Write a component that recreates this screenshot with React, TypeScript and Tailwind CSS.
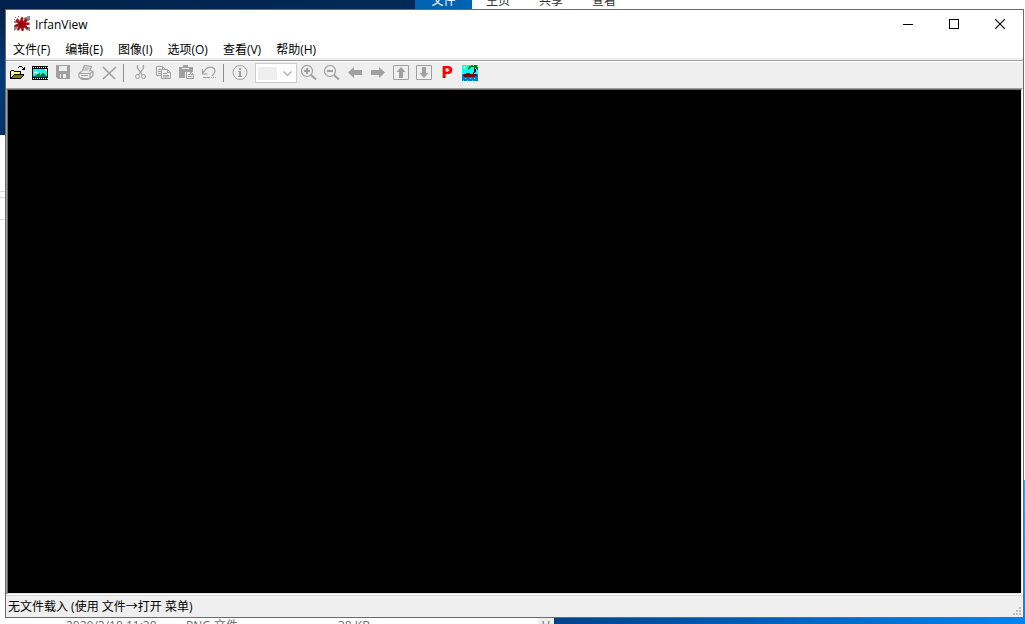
import type { ReactNode } from "react";

const PALETTE: Record<string, string> = {
  k: "#000000",
  y: "#ffff00",
  w: "#ffffff",
  o: "#808000",
  c: "#00ffff",
  g: "#008000",
  t: "#008080",
  b: "#0078d7",
  m: "#800000",
};

function PixelIcon({ rows }: { rows: string[] }) {
  return (
    <svg viewBox="0 0 16 16" className="block size-4" shapeRendering="crispEdges" aria-hidden="true">
      {rows.flatMap((row, y) =>
        row.split("").map((ch, x) =>
          PALETTE[ch] ? <rect key={x + "-" + y} x={x} y={y} width="1" height="1" fill={PALETTE[ch]} /> : null
        )
      )}
    </svg>
  );
}

const FOLDER = [
  "................",
  "..........kkk...",
  ".........k...k.k",
  "..............kk",
  ".............kkk",
  "..kkk...........",
  ".kywykkkkkkk....",
  ".kwywywywywk....",
  ".kywywywywyk....",
  ".kwywkkkkkkkkkk.",
  ".kywkoooooooook.",
  ".kwkoooooooook..",
  ".kkoooooooook...",
  ".kkkkkkkkkkk....",
  "................",
  "................",
];

const FILM = [
  "................",
  "kkkkkkkkkkkkkkkk",
  "kwkwkwkwkwkwkwkw",
  "kkkkkkkkkkkkkkkk",
  "kccccccccccccwwk",
  "kccccccccccccwwk",
  "kccwwcccccccccck",
  "kcwwwwccccycccck",
  "kccccccgccggccck",
  "kccccgggcgggtcck",
  "kccggggggggggtck",
  "kttttttttttttttk",
  "kkkkkkkkkkkkkkkk",
  "kwkwkwkwkwkwkwkw",
  "kkkkkkkkkkkkkkkk",
  "................",
];

const PALM = [
  "cccccccccggcgggc",
  "ccyccccggggggggc",
  "cyyyccgggcccgggg",
  "ccycccggccccmcgg",
  "ccccccgcccccmmcg",
  "ccccccccccccmmcc",
  "ccccccccccccmmcc",
  "cccccccccccmmccc",
  "ccccmmmmcccmcccc",
  "bbmmmmmmmmmmmmbb",
  "bmmmmmmmmmmmmmmb",
  "bbmmmmmmmmmmmbbb",
  "bbbbbbbbbbbbbbbb",
  "bbbcbbbbcbbbcbbb",
  "bbbbbbbbbbbbbbbb",
  "bcbbbcbbbbcbbbbb",
];

function Glyph({ children }: { children: ReactNode }) {
  return (
    <svg viewBox="0 0 16 16" className="block size-4" fill="none" stroke="#a0a0a0" aria-hidden="true">
      {children}
    </svg>
  );
}

const SaveIcon = (
  <Glyph>
    <path d="M1 0h14v14H3l-2-2z" fill="#a0a0a0" stroke="none" />
    <path d="M4 1h8v5H4zM5 9h6v4H5z" fill="#efefef" stroke="none" />
    <path d="M6 9h2v4H6z" fill="#a0a0a0" stroke="none" />
  </Glyph>
);
const PrintIcon = (
  <Glyph>
    <path d="M4 6.5 6.5.5l7 1-2 5M6.500 3h5M5.500 5h5M3.500 6.500 1 8.500v3.500l2 1.500h9l3-3V6.500l-2-1M1 8.500h11l3-2M12 8.500v5M3 10.500h7M4 12v2.500h6l2-1.500" strokeWidth="1.200" />
  </Glyph>
);
const DeleteIcon = (
  <Glyph>
    <path d="M2 2 14 14M15 2 2 14" strokeWidth="1.600" />
  </Glyph>
);
const CutIcon = (
  <Glyph>
    <path d="M5.500 0v3l5 7M11.500 0v3l-5 7" strokeWidth="1.200" />
    <circle cx="5.500" cy="11.500" r="2" />
    <circle cx="11.500" cy="11.500" r="2" />
  </Glyph>
);
const CopyIcon = (
  <Glyph>
    <path d="M6.500 10.500h-5v-9h6l3 3M7.500 1.500v3M3 4.500h3M3 6.500h3M3 8.500h3M6.500 4.500h6l3 3v6h-9zM12.500 4.500v3h3M8 8.500h4M8 10.500h6M8 12h6" />
  </Glyph>
);
const PasteIcon = (
  <Glyph>
    <path d="M1 2h4V0h5v2h5v5H7v6H1z" fill="#a0a0a0" stroke="none" />
    <path d="M4 3.500h7" stroke="#efefef" />
    <path d="M8.500 6.500h4l3 3v4h-7zM12.500 6.500v3h3M10 9.500h2M10 11.500h4" fill="#efefef" />
  </Glyph>
);
const UndoIcon = (
  <Glyph>
    <path d="M1.500 4v5h5M1.500 8.500 5 4c3-3 9-2 9 2 0 2-1 3-3 5" strokeWidth="1.200" />
    <path d="M2 12.500h7M10 12.500h1M12 12.500h1M14 12.500h1" />
  </Glyph>
);
const InfoIcon = (
  <Glyph>
    <circle cx="8" cy="7.500" r="7" />
    <path d="M7 3h2v2H7zM6 6h3v5h1v1H6v-1h1V7H6z" fill="#a0a0a0" stroke="none" />
  </Glyph>
);
const ZoomInIcon = (
  <Glyph>
    <circle cx="6" cy="6" r="5.500" strokeWidth="1.200" />
    <path d="M3 6h6M6 3v6M10 10l5 4.500" strokeWidth="2" />
  </Glyph>
);
const ZoomOutIcon = (
  <Glyph>
    <circle cx="6" cy="6" r="5.500" strokeWidth="1.200" />
    <path d="M3 6h6M10 10l5 4.500" strokeWidth="2" />
  </Glyph>
);
const LeftIcon = (
  <Glyph>
    <path d="M1 7.500 7 2v3h8v5H7v3z" fill="#a0a0a0" stroke="none" />
  </Glyph>
);
const RightIcon = (
  <Glyph>
    <path d="M15 7.500 9 2v3H1v5h8v3z" fill="#a0a0a0" stroke="none" />
  </Glyph>
);
const UpIcon = (
  <Glyph>
    <path d="M.5.5h15v14H.5z" />
    <path d="M8 2 3.500 7H6v6h4V7h2.500z" fill="#a0a0a0" stroke="none" />
  </Glyph>
);
const DownIcon = (
  <Glyph>
    <path d="M.5.5h15v14H.5z" />
    <path d="M8 13 3.500 8H6V2h4v6h2.500z" fill="#a0a0a0" stroke="none" />
  </Glyph>
);

function Tool({ label, children }: { label: string; children: ReactNode }) {
  return (
    <button type="button" aria-label={label} className="flex size-4 shrink-0 items-center justify-center">
      {children}
    </button>
  );
}

function Separator() {
  return <span className="mr-2 ml-1.5 h-[18px] w-px bg-[#8c8c8c]" />;
}

function AppIcon() {
  return (
    <svg viewBox="0 0 16 16" className="size-4" aria-hidden="true">
      <path d="M9 2l6-2h1v4l-5 3zM0 10l4 0-1 3-3 2zM11 11l5 0v4l-4-1zM0 5h3v2H0z" fill="#8d8987" />
      <path d="M4 3l2 2 1-4 2 .5V5l3-2.500 1.500 1L12 6.500l3.500 0V9L12 9l2.500 3-1.500 1.500L10 11.500 9.500 15H7.500L7 12l-3 3-1-1 1-3.500L.5 11V9L4 7.500 1.500 5 2 3.500z" fill="#a81014" />
      <path d="M6 6h4l1 4-4 2-2-3z" fill="#900c10" />
      <path d="M1 1h1v1H1zM4 0h1v1H4zM0 3h1v1H0zM3 2h1v1H3z" fill="#c44" />
    </svg>
  );
}

const MENUS = ["文件(F)", "编辑(E)", "图像(I)", "选项(O)", "查看(V)", "帮助(H)"];

function IrfanWindow() {
  return (
    <main className="flex min-w-0 flex-1 flex-col border border-[#6b6b6b] bg-[#efefef]">
      <header className="flex h-7 items-center bg-white pl-2">
        <AppIcon />
        <h1 className="ml-[5px] flex-1 pt-0.5 text-xs">IrfanView</h1>
        <button type="button" aria-label="最小化" className="flex h-7 w-[46px] items-center justify-center">
          <svg viewBox="0 0 10 10" className="size-2.5" shapeRendering="crispEdges">
            <path d="M0 5h10v1H0z" />
          </svg>
        </button>
        <button type="button" aria-label="最大化" className="flex h-7 w-[46px] items-center justify-center">
          <svg viewBox="0 0 10 10" className="size-2.5" fill="none" stroke="#000" shapeRendering="crispEdges">
            <path d="M.5.5h9v9h-9z" />
          </svg>
        </button>
        <button type="button" aria-label="关闭" className="flex h-7 w-[46px] items-center justify-center">
          <svg viewBox="0 0 10 10" className="size-2.5" fill="none" stroke="#000">
            <path d="M0 0l10 10M10 0 0 10" strokeWidth="1.100" />
          </svg>
        </button>
      </header>
      <nav className="flex h-5 items-end gap-[15px] bg-white pl-[7px] text-xs">
        {MENUS.map((m) => (
          <button key={m} type="button" className="whitespace-nowrap">
            {m}
          </button>
        ))}
      </nav>
      <div className="mt-0.5 flex h-7 items-start border-t border-[#a0a0a0] pl-[3px] shadow-[inset_0_1px_0_#fff]">
        <div className="flex items-center pt-0.5">
          <div className="flex gap-[7px]">
            <Tool label="打开"><PixelIcon rows={FOLDER} /></Tool>
            <Tool label="幻灯片"><PixelIcon rows={FILM} /></Tool>
            <Tool label="保存">{SaveIcon}</Tool>
            <Tool label="打印">{PrintIcon}</Tool>
            <Tool label="删除">{DeleteIcon}</Tool>
          </div>
          <Separator />
          <div className="flex gap-[7px]">
            <Tool label="剪切">{CutIcon}</Tool>
            <Tool label="复制">{CopyIcon}</Tool>
            <Tool label="粘贴">{PasteIcon}</Tool>
            <Tool label="撤消">{UndoIcon}</Tool>
          </div>
          <Separator />
          <Tool label="信息">{InfoIcon}</Tool>
          <div className="mr-1 ml-[7px] grid h-5 w-[42px] items-center border border-[#cccccc] bg-white">
            <select
              aria-label="缩放"
              disabled
              className="col-start-1 row-start-1 ml-0.5 h-[13px] w-[19px] appearance-none bg-[#efefef]"
            >
              <option></option>
            </select>
            <svg
              viewBox="0 0 9 6"
              className="pointer-events-none col-start-1 row-start-1 mt-0.5 mr-1 h-1.5 w-[9px] justify-self-end"
              fill="none"
              stroke="#a8a8a8"
              aria-hidden="true"
            >
              <path d="M.5.5l4 4 4-4" strokeWidth="1.200" />
            </svg>
          </div>
          <div className="flex gap-[7px]">
            <Tool label="放大">{ZoomInIcon}</Tool>
            <Tool label="缩小">{ZoomOutIcon}</Tool>
            <Tool label="上一个文件">{LeftIcon}</Tool>
            <Tool label="下一个文件">{RightIcon}</Tool>
            <Tool label="上一页">{UpIcon}</Tool>
            <Tool label="下一页">{DownIcon}</Tool>
            <Tool label="属性">
              <span className="font-['DejaVu_Sans',sans-serif] text-base leading-4 font-bold text-[#ff0000]">P</span>
            </Tool>
            <Tool label="关于"><PixelIcon rows={PALM} /></Tool>
          </div>
        </div>
      </div>
      <section className="flex flex-1 border border-t-[#a0a0a0] border-r-white border-b-white border-l-[#a0a0a0]">
        <div className="flex-1 border border-t-[#696969] border-r-[#e3e3e3] border-b-[#e3e3e3] border-l-[#696969] bg-black" />
      </section>
      <footer className="flex h-[22px] items-center justify-between border-t border-[#d7d7d7] pl-0.5 text-xs">
        <p>无文件载入 (使用 文件→打开 菜单)</p>
        <svg
          viewBox="0 0 8 8"
          className="mr-0.5 mb-0.5 size-2 self-end"
          fill="#bfbfbf"
          shapeRendering="crispEdges"
          aria-hidden="true"
        >
          <path d="M6 0h2v2H6zM3 3h2v2H3zM6 3h2v2H6zM0 6h2v2H0zM3 6h2v2H3zM6 6h2v2H6z" />
        </svg>
      </footer>
    </main>
  );
}

export default function App() {
  return (
    <div className="flex h-screen flex-col overflow-hidden bg-white font-['Open_Sans','Noto_Sans_CJK_SC',sans-serif] text-black">
      <div className="flex h-[9px] items-end overflow-hidden text-xs leading-4 text-[#333]">
        <div className="h-full w-[415px] bg-linear-to-r from-[#00214b] to-[#002a55]" />
        <div className="flex h-full w-[57px] items-end justify-center bg-[#0063b1] text-white">文件</div>
        <div className="flex gap-[29px] pl-3.5">
          <span>主页</span>
          <span>共享</span>
          <span>查看</span>
        </div>
      </div>
      <div className="flex min-h-0 flex-1">
        <div className="flex w-[5px] flex-col">
          <div className="h-[126px] bg-linear-to-b from-[#00214b] via-[#003a78] to-[#003468]" />
          <div className="mt-14 h-[7px] border-y border-[#d9d9d9]" />
          <div className="h-[22px] border-b border-[#d9d9d9]" />
        </div>
        <IrfanWindow />
        <div className="flex w-px flex-col justify-end">
          <div className="h-[138px] bg-linear-to-b from-[#35a8e8] to-[#0086f0]" />
        </div>
      </div>
      <div className="flex h-1.5 items-start overflow-hidden text-xs leading-3 whitespace-nowrap text-[#6d6d6d]">
        <div className="flex h-full flex-1 items-start overflow-hidden pt-0.5 pl-[66px]">
          <span className="w-[120px]">2020/3/10 11:38</span>
          <span className="w-[152px]">PNG 文件</span>
          <span>38 KB</span>
        </div>
        <div className="h-full w-4 bg-[#efefef] pt-0.5 text-center">H</div>
        <div className="h-full w-[471px] bg-linear-to-r from-[#00428a] to-[#0086f5]" />
      </div>
    </div>
  );
}
